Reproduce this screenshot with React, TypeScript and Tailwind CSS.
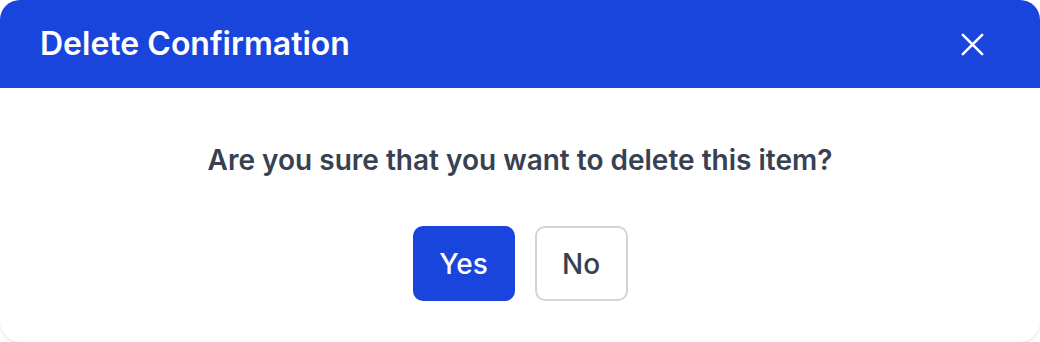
import React from 'react';

const App: React.FC = () => {
  return (
    <div className="w-[1040px] h-[342px] bg-white" style={{ fontFamily: 'Inter, "Noto Sans", sans-serif' }}>
      <div className="h-full rounded-[20px] overflow-hidden bg-white shadow-sm flex flex-col">
        {/* Header */}
        <div className="h-[88px] bg-[#1a45dc] flex items-center justify-between pl-[40px] pr-[53px]">
          <h2 className="text-[32px] font-semibold text-white">Delete Confirmation</h2>
          <button className="text-white">
            <svg width="29" height="29" viewBox="0 0 24 24" fill="none" stroke="currentColor" strokeWidth="2.2" strokeLinecap="round">
              <path d="M4 4L20 20M20 4L4 20" />
            </svg>
          </button>
        </div>
        {/* Body */}
        <div className="flex flex-col items-center pt-[54px]">
          <p className="text-[28px] font-semibold text-[#374151] leading-[36px]">
            Are you sure that you want to delete this item?
          </p>
          <div className="flex gap-[20px] mt-[48px]">
            <button className="h-[75px] w-[102px] rounded-[10px] bg-[#1a45dc] text-white text-[28px] font-medium">
              Yes
            </button>
            <button className="h-[75px] w-[93px] rounded-[10px] border-2 border-[#d1d5db] bg-white text-[#374151] text-[28px] font-medium">
              No
            </button>
          </div>
        </div>
      </div>
    </div>
  );
};

export default App;
